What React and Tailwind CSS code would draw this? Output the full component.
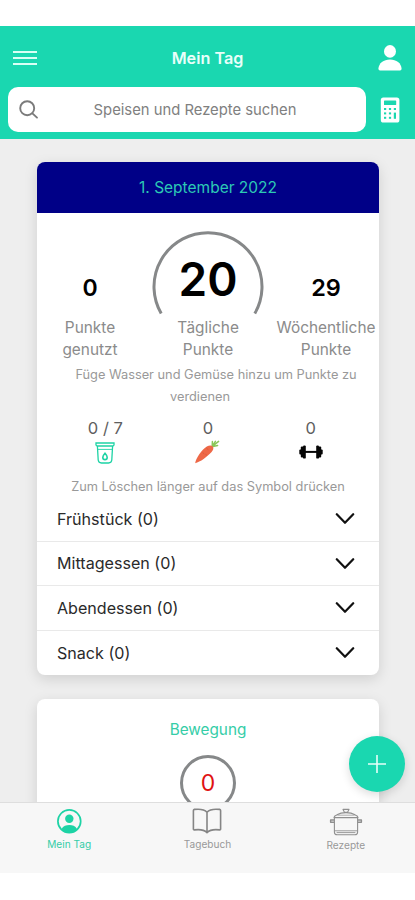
import { useState } from "react";

const meals = [
  { name: "Frühstück", count: 0 },
  { name: "Mittagessen", count: 0 },
  { name: "Abendessen", count: 0 },
  { name: "Snack", count: 0 },
];

const MenuIcon = () => (
  <svg width="24" height="16" viewBox="0 0 24 16" stroke="#d9fff5" strokeWidth="2">
    <path d="M0 2H24M0 8H24M0 14H24" />
  </svg>
);

const UserIcon = () => (
  <svg width="24" height="28" viewBox="0 0 24 28" fill="#fff">
    <ellipse cx="12" cy="7.4" rx="6" ry="6.3" />
    <path d="M0.4 24.8C0.8 18.9 5.6 15.4 12 15.4S23.2 18.9 23.6 24.8Q23.6 26.6 22 26.6H2Q0.4 26.6 0.4 24.8Z" />
  </svg>
);

const SearchIcon = () => (
  <svg width="20" height="20" viewBox="0 0 20 20" fill="none" stroke="#7b7b7b" strokeWidth="1.9">
    <circle cx="8.2" cy="8.2" r="7" />
    <path d="M13.4 13.4L18 17.6" strokeLinecap="round" />
  </svg>
);

const CalculatorIcon = () => (
  <svg width="20" height="26" viewBox="0 0 20 26">
    <rect x="0.8" y="0.5" width="18.6" height="25" rx="2.6" fill="#fff" />
    <g fill="#1ad7b0">
      <rect x="4" y="3.4" width="12.2" height="4.6" rx="0.6" />
      <rect x="4" y="11" width="2.2" height="2" />
      <rect x="8.9" y="11" width="2.2" height="2" />
      <rect x="13.8" y="11" width="2.2" height="2" />
      <rect x="4" y="15.4" width="2.2" height="2" />
      <rect x="8.9" y="15.4" width="2.2" height="2" />
      <rect x="4" y="19.8" width="2.2" height="2" />
      <rect x="8.9" y="19.8" width="2.2" height="2" />
      <rect x="13.8" y="15.6" width="2.2" height="6.2" />
    </g>
  </svg>
);

const WaterIcon = () => (
  <svg width="20" height="22" viewBox="0 0 20 22" fill="none" stroke="#1dd3a5" strokeWidth="1.3">
    <path d="M1 1H19V3Q18.6 4 17.4 4H2.6Q1.4 4 1 3Z" />
    <path d="M2.4 4L3.2 18Q3.6 21 6.4 21H13.6Q16.4 21 16.8 18L17.6 4" />
    <path d="M3 7.4H17" strokeWidth="0.9" />
    <path d="M10 11.2C8.5 12.8 7.8 14 7.8 15.2A2.2 2.4 0 0 0 12.2 15.2C12.2 14 11.5 12.8 10 11.2Z" strokeWidth="1.6" />
  </svg>
);

const CarrotIcon = () => (
  <svg width="26" height="24" viewBox="0 0 26 24">
    <path d="M18.2 6.2L18.4 1.6M18.4 6L21.4 1.4M18.6 6.2L24.6 1.4M18.8 6.6L23.6 5.4" stroke="#8bc75a" strokeWidth="1.5" strokeLinecap="round" />
    <path d="M1.2 23.2C1.8 18.8 7.6 9.6 12.8 6.6C15.2 5.2 17.6 5.2 18.8 6.6C20 8.2 19.2 10.2 17.6 12C13.2 16.8 6.2 22 1.2 23.2Z" fill="#ee6847" />
    <path d="M12.4 8L14.4 9.8M8.6 12.6L10.2 13.8M13 15.4L11.4 14.2" stroke="#d95536" strokeWidth="0.8" />
  </svg>
);

const DumbbellIcon = () => (
  <svg width="24" height="14" viewBox="0 0 24 14" fill="#050505">
    <rect x="0.3" y="4.6" width="2.6" height="5" rx="1" />
    <rect x="1.8" y="1.6" width="2.8" height="10.8" rx="1" />
    <rect x="4" y="0.4" width="2.8" height="13.2" rx="1.2" />
    <rect x="6" y="5.9" width="12" height="2" />
    <rect x="17.2" y="0.4" width="2.8" height="13.2" rx="1.2" />
    <rect x="19.4" y="1.6" width="2.8" height="10.8" rx="1" />
    <rect x="21.1" y="4.6" width="2.6" height="5" rx="1" />
  </svg>
);

const ChevronIcon = () => (
  <svg width="20" height="12" viewBox="0 0 20 12" fill="none" stroke="#111" strokeWidth="2.2">
    <path d="M1.8 1.2L10 9.8L18.2 1.2" strokeLinecap="round" strokeLinejoin="round" />
  </svg>
);

const ProfileIcon = () => (
  <svg width="26" height="26" viewBox="0 0 26 26">
    <circle cx="13.3" cy="13.3" r="11.4" fill="none" stroke="#1dd3a5" strokeWidth="1.7" />
    <circle cx="13.3" cy="10.7" r="4.2" fill="#1dd3a5" />
    <path d="M5.5 20.9C7.3 18.1 10.1 17.1 13.3 17.1S19.3 18.1 21.1 20.9C18.9 23.5 16.3 24.6 13.3 24.6S7.7 23.5 5.5 20.9Z" fill="#1dd3a5" />
  </svg>
);

const BookIcon = () => (
  <svg width="30" height="26" viewBox="0 0 30 26" fill="none" stroke="#858585" strokeWidth="1.6" strokeLinejoin="round">
    <path d="M15 4.2C12.6 1.6 7.6 0.8 2.4 1.4Q1.4 1.6 1.4 2.6V21Q1.4 22 2.4 21.9C7.6 21.2 12.2 21.8 15 24.6C17.8 21.8 22.4 21.2 27.6 21.9Q28.6 22 28.6 21V2.6Q28.6 1.6 27.6 1.4C22.4 0.8 17.4 1.6 15 4.2ZM15 4.2V24.6" />
  </svg>
);

const PotIcon = () => (
  <svg width="34" height="28" viewBox="0 0 34 28" fill="none" stroke="#8f8f8f" strokeWidth="1.1" strokeLinejoin="round">
    <path d="M14 1.4H20L18.4 4.4H15.6Z" />
    <path d="M5 9.6C5 7.8 6.4 7.4 8 6.8C10.6 5.2 13.6 4.6 17 4.6S23.4 5.2 26 6.8C27.6 7.4 29 7.8 29 9.6Z" />
    <path d="M8.4 7.2H25.6" strokeWidth="0.7" />
    <path d="M5.4 9.6V24Q5.4 26.8 8.2 26.8H25.8Q28.6 26.8 28.6 24V9.6" />
    <path d="M5.4 22.8H28.6M7.6 24.6H26.4" strokeWidth="0.9" />
    <path d="M5.4 12H1.6V14.2H5.4M28.6 12H32.4V14.2H28.6" strokeWidth="1.4" />
  </svg>
);

const App = () => {
  const [openMeal, setOpenMeal] = useState(null);

  return (
    <div className="relative flex h-[900px] w-[415px] flex-col overflow-hidden bg-white pt-[26px] font-['Inter','Liberation_Sans',sans-serif]">

      {/* HEADER */}
      <header className="h-[113px] shrink-0 bg-[#1ad7b0] pt-[17px]">
        <div className="flex h-[30px] items-center justify-between px-[13px]">
          <button><MenuIcon /></button>
          <h1 className="text-[16.2px] font-semibold text-[#e9fffa]">Mein Tag</h1>
          <button><UserIcon /></button>
        </div>
        <div className="mt-[14px] flex h-[45px] items-center pr-[15px] pl-2">
          <div className="flex h-full w-[358px] items-center rounded-[10px] bg-white pl-[11px]">
            <SearchIcon />
            <span className="flex-1 pt-px pr-[15px] text-center text-[14.8px] whitespace-nowrap text-[#808080]">
              Speisen und Rezepte suchen
            </span>
          </div>
          <button className="ml-auto"><CalculatorIcon /></button>
        </div>
      </header>

      {/* CONTENT */}
      <main className="h-[663px] shrink-0 overflow-hidden bg-[#eeeeee] pt-[23px] pr-9 pl-[37px]">

        {/* POINTS OF THE DAY */}
        <section className="h-[513px] overflow-hidden rounded-lg bg-white shadow-[0_4px_14px_rgba(0,0,0,0.13)]">
          <div className="flex h-[51px] items-center justify-center bg-[#000087] pt-px text-[15.5px] text-[#2cc9b4]">
            <span>1. September 2022</span>
          </div>

          <div className="-mx-1.5 grid h-[104px] grid-cols-3 text-center">
            <div className="pt-[60px] text-[23px] leading-[30px] font-semibold text-black">0</div>
            <div className="relative pt-[18px]">
              <svg className="mx-auto block" width="114" height="86" viewBox="0 0 114 86" fill="none">
                <path d="M10.2 82.6A54 54 0 1 1 103.8 82.6" stroke="#868889" strokeWidth="3" />
              </svg>
              <span className="absolute inset-x-0 top-[36px] text-[46px] leading-[60px] font-semibold text-black">20</span>
            </div>
            <div className="pt-[60px] text-[23.5px] leading-[30px] font-semibold text-black">29</div>
          </div>

          <div className="-mx-1.5 grid grid-cols-3 text-center text-[15.4px] leading-[22px] text-[#8b8b8b]">
            <p>Punkte<br />genutzt</p>
            <p>Tägliche<br />Punkte</p>
            <p>Wöchentliche<br />Punkte</p>
          </div>

          <p className="mt-[3px] text-center text-[12.8px] leading-[22px] text-[#999]">
            <span className="pl-4">Füge Wasser und Gemüse hinzu um Punkte zu</span><br />
            <span className="pr-4">verdienen</span>
          </p>

          {/* WATER / VEGETABLES / SPORT */}
          <div className="mx-[17px] mt-[9px] grid h-[59px] grid-cols-3 text-center text-[16.5px] leading-[22px] text-[#606060]">
            <div className="flex flex-col items-center">
              <span>0 / 7</span>
              <div className="mt-[3px]"><WaterIcon /></div>
            </div>
            <div className="flex flex-col items-center">
              <span>0</span>
              <div className="mt-px mr-[2px]"><CarrotIcon /></div>
            </div>
            <div className="flex flex-col items-center">
              <span>0</span>
              <div className="mt-[6px]"><DumbbellIcon /></div>
            </div>
          </div>

          <p className="text-center text-[12.8px] leading-[22px] text-[#999]">
            Zum Löschen länger auf das Symbol drücken
          </p>

          {/* MEALS */}
          <div className="mt-[-1px] divide-y divide-[#e9e9e9]">
            {meals.map((meal) => (
              <button
                key={meal.name}
                onClick={() => setOpenMeal(openMeal === meal.name ? null : meal.name)}
                className="flex h-[44.7px] w-full items-center justify-between pr-[24px] pl-5 text-[16.1px] text-[#2a2a2a]"
              >
                <span>{meal.name} ({meal.count})</span>
                <ChevronIcon />
              </button>
            ))}
          </div>
        </section>

        {/* EXERCISE */}
        <section className="mt-6 h-[160px] rounded-lg bg-white pt-[20px] text-center shadow-[0_4px_14px_rgba(0,0,0,0.13)]">
          <h2 className="text-[15.3px] leading-[22px] text-[#35cda7]">Bewegung</h2>
          <div className="mx-auto mt-[14px] flex size-[56px] items-center justify-center rounded-full border-3 border-[#868889] text-[23px] text-[#e01212]">
            0
          </div>
        </section>
      </main>

      {/* TAB BAR */}
      <nav className="grid h-[71px] shrink-0 grid-cols-3 border-t border-[#dedede] bg-[#f7f7f7] text-[10.1px] leading-[14px] text-[#999]">
        <button className="flex flex-col items-center pt-[5px] text-[#35cda7]">
          <ProfileIcon />
          <span className="mt-[3px]">Mein Tag</span>
        </button>
        <button className="flex flex-col items-center pt-[5px]">
          <BookIcon />
          <span className="mt-[3px]">Tagebuch</span>
        </button>
        <button className="flex flex-col items-center pt-[5px]">
          <PotIcon />
          <span className="mt-[2px]">Rezepte</span>
        </button>
      </nav>

      {/* ADD BUTTON */}
      <button className="absolute top-[736px] left-[349px] flex size-[56px] items-center justify-center rounded-full bg-[#1ad7b0] shadow-[0_3px_10px_rgba(0,0,0,0.14)]">
        <svg width="18" height="18" viewBox="0 0 18 18" stroke="#e6fff9" strokeWidth="1.6">
          <path d="M9 0V18M0 9H18" />
        </svg>
      </button>
    </div>
  );
};

export default App;
